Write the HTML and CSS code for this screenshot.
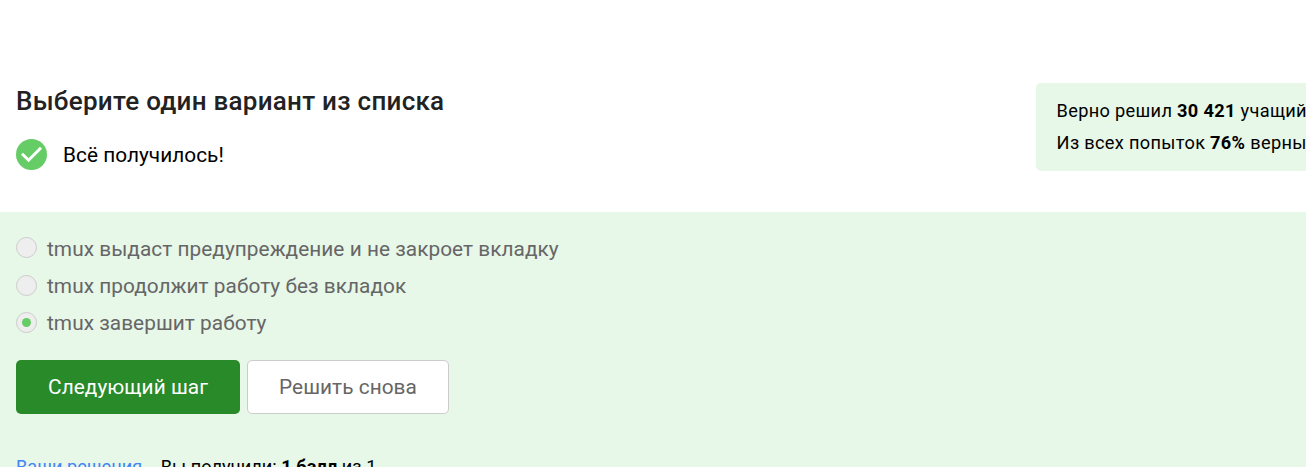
FILE: index.html
```html
<!DOCTYPE html>
<html lang="ru">
<head>
<meta charset="utf-8">
<title>Выберите один вариант из списка</title>
<link rel="stylesheet" href="styles.css">
</head>
<body>
<main class="quiz">
  <header class="quiz-head">
    <div class="intro">
      <h1 class="title">Выберите один вариант из списка</h1>
      <div class="status">
        <svg class="status-icon" viewBox="0 0 32 32"><circle cx="16" cy="16" r="16" fill="#66cc66"/><path d="M6.2 15.2l6.8 6.7L25.8 9" fill="none" stroke="#fff" stroke-width="3.1"/></svg>
        <span class="status-text">Всё получилось!</span>
      </div>
    </div>
    <aside class="stats">
      <p class="stat">Верно решил <b>30 421</b> учащийся</p>
      <p class="stat">Из всех попыток <b>76%</b> верных</p>
    </aside>
  </header>
  <section class="attempt">
    <div class="options">
      <div class="option"><span class="radio"></span><span class="label">tmux выдаст предупреждение и не закроет вкладку</span></div>
      <div class="option"><span class="radio"></span><span class="label">tmux продолжит работу без вкладок</span></div>
      <div class="option"><span class="radio checked"></span><span class="label">tmux завершит работу</span></div>
    </div>
    <div class="actions">
      <button class="btn primary"><span>Следующий шаг</span></button>
      <button class="btn secondary"><span>Решить снова</span></button>
    </div>
    <footer class="foot">
      <a class="link">Ваши решения</a>
      <span class="score">Вы получили: <b>1 балл</b> из 1</span>
    </footer>
  </section>
</main>
</body>
</html>
```
FILE: styles.css
```css
* { box-sizing: border-box; }
body { margin: 0; background: #fff; color: #000; font-family: Roboto, "Noto Sans", sans-serif; overflow: hidden; }
.quiz { height: 467px; overflow: hidden; }
.quiz-head { display: flex; height: 212px; padding: 83px 0 0 16px; }
.intro { width: 1020px; flex: none; }
.title { margin: 0; color: #222; font-size: 26px; font-weight: 500; line-height: 36px; white-space: nowrap; letter-spacing: .27px; }
.status { display: flex; align-items: center; gap: 16px; margin-top: 20px; height: 31px; }
.status-icon { width: 31px; height: 31px; }
.status-text { font-size: 20.8px; letter-spacing: .03px; }
.stats { flex: none; width: 300px; height: 88px; padding: 12px 0 0 20.6px; background: #e7f7e8; border-radius: 5px; }
.stat { margin: 0; font-size: 18.2px; line-height: 32px; white-space: nowrap; letter-spacing: .32px; }
.stat b { font-weight: 700; }
.attempt { height: 255px; padding: 18px 16px 0; background: #e7f7e8; overflow: hidden; }
.option { display: flex; align-items: center; height: 37px; gap: 10px; }
.radio { display: grid; place-items: center; width: 21px; height: 21px; margin-top: -2px; border: 1px solid #ccc; border-radius: 50%; background: #eee; }
.option + .option .radio { margin-top: -1px; }
.checked::after { content: ""; width: 9px; height: 9px; border-radius: 50%; background: #66cc66; }
.label { color: #666; font-size: 20.8px; letter-spacing: .045px; white-space: nowrap; }
.actions { display: flex; gap: 7px; margin-top: 19px; }
.btn { height: 54px; padding: 0; border-radius: 5px; font: 20.8px Roboto, "Noto Sans", sans-serif; letter-spacing: .05px; white-space: nowrap; }
.primary { width: 224px; border: 0; background: #288a28; color: #fff; }
.secondary { width: 202px; border: 1px solid #ccc; background: #fff; color: #666; }
.foot { display: flex; gap: 18.5px; margin-top: 42px; font-size: 18.2px; line-height: 22px; white-space: nowrap; }
.score { letter-spacing: .04px; }
.link { color: #4285f4; }
```
